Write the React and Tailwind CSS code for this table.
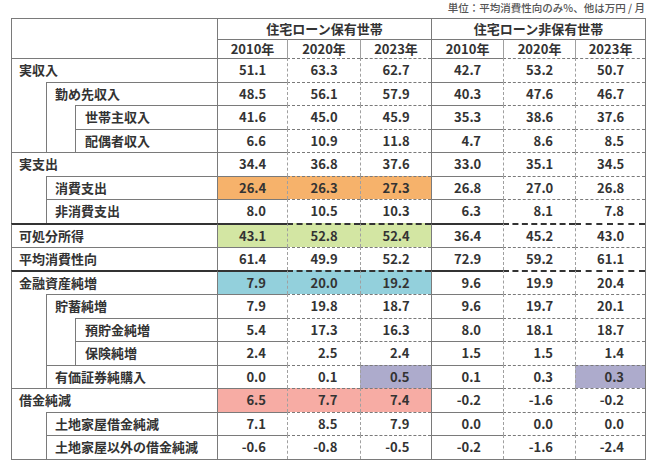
import React from 'react';

const BG = {
  o: 'bg-[#f6b26b]',
  g: 'bg-[#d3e6a3]',
  b: 'bg-[#93d0dc]',
  p: 'bg-[#adabcc]',
  r: 'bg-[#f7aca4]',
};

const rows = [
  { label: '実収入', span: 3, v: ['51.1', '63.3', '62.7', '42.7', '53.2', '50.7'] },
  { label: '勤め先収入', indent: 3, span: 2, v: ['48.5', '56.1', '57.9', '40.3', '47.6', '46.7'] },
  { label: '世帯主収入', indent: 2, span: 1, v: ['41.6', '45.0', '45.9', '35.3', '38.6', '37.6'] },
  { label: '配偶者収入', span: 1, v: ['6.6', '10.9', '11.8', '4.7', '8.6', '8.5'] },
  { label: '実支出', span: 3, v: ['34.4', '36.8', '37.6', '33.0', '35.1', '34.5'] },
  { label: '消費支出', indent: 2, span: 2, v: ['26.4', '26.3', '27.3', '26.8', '27.0', '26.8'], bg: ['o', 'o', 'o'] },
  { label: '非消費支出', span: 2, v: ['8.0', '10.5', '10.3', '6.3', '8.1', '7.8'] },
  { label: '可処分所得', span: 3, thick: true, v: ['43.1', '52.8', '52.4', '36.4', '45.2', '43.0'], bg: ['g', 'g', 'g'] },
  { label: '平均消費性向', span: 3, v: ['61.4', '49.9', '52.2', '72.9', '59.2', '61.1'] },
  { label: '金融資産純増', span: 3, thick: true, v: ['7.9', '20.0', '19.2', '9.6', '19.9', '20.4'], bg: ['b', 'b', 'b'] },
  { label: '貯蓄純増', indent: 4, span: 2, v: ['7.9', '19.8', '18.7', '9.6', '19.7', '20.1'] },
  { label: '預貯金純増', indent: 2, span: 1, v: ['5.4', '17.3', '16.3', '8.0', '18.1', '18.7'] },
  { label: '保険純増', span: 1, v: ['2.4', '2.5', '2.4', '1.5', '1.5', '1.4'] },
  { label: '有価証券純購入', span: 2, v: ['0.0', '0.1', '0.5', '0.1', '0.3', '0.3'], bg: [null, null, 'p', null, null, 'p'] },
  { label: '借金純減', span: 3, v: ['6.5', '7.7', '7.4', '-0.2', '-1.6', '-0.2'], bg: ['r', 'r', 'r'] },
  { label: '土地家屋借金純減', indent: 2, span: 2, v: ['7.1', '8.5', '7.9', '0.0', '0.0', '0.0'] },
  { label: '土地家屋以外の借金純減', span: 2, v: ['-0.6', '-0.8', '-0.5', '-0.2', '-1.6', '-2.4'] },
];

const padFor = { 3: 'pl-[7px]', 2: 'pl-[8px]', 1: 'pl-[9px]' };
const years = ['2010年', '2020年', '2023年', '2010年', '2020年', '2023年'];

function leftBorder(i) {
  return i % 3 === 0
    ? 'border-l border-l-[#7a7a7a] border-solid'
    : 'border-l border-l-[#a0a0a0] border-dashed';
}

export default function App() {
  return (
    <div
      className="w-[660px] h-[464px] bg-white text-[#333]"
      style={{ fontFamily: '"Noto Sans CJK JP", "Noto Sans", sans-serif' }}
    >
      <div className="h-[18px] flex items-start justify-end pr-[15px] pt-[1px]">
        <span className="text-[10.5px] leading-[14px] text-[#555] font-medium">
          単位：平均消費性向のみ%、他は万円 / 月
        </span>
      </div>
      <div className="pl-[11px]">
        <table className="table-fixed border-separate border-spacing-0 w-[635px] border-r border-b border-[#7a7a7a] text-[13px] font-bold">
          <colgroup>
            <col className="w-[35px]" />
            <col className="w-[29px]" />
            <col className="w-[142px]" />
            <col className="w-[70px]" />
            <col className="w-[73px]" />
            <col className="w-[71px]" />
            <col className="w-[72px]" />
            <col className="w-[72px]" />
            <col className="w-[70px]" />
          </colgroup>
          <tbody>
            <tr className="h-[21px]">
              <td colSpan={3} rowSpan={2} className="border-t border-l border-[#7a7a7a] p-0" />
              <td colSpan={3} className="border-t border-l border-[#7a7a7a] p-0 text-center leading-[20px]">
                住宅ローン保有世帯
              </td>
              <td colSpan={3} className="border-t border-l border-[#7a7a7a] p-0 text-center leading-[20px]">
                住宅ローン非保有世帯
              </td>
            </tr>
            <tr className="h-[19px]">
              {years.map((y, i) => (
                <td
                  key={i}
                  className={`border-t border-t-[#7a7a7a] border-solid p-0 text-center leading-[18px] ${leftBorder(i)}`}
                >
                  {y}
                </td>
              ))}
            </tr>
            {rows.map((r, ri) => {
              const top = r.thick
                ? 'border-t-2 border-t-[#333]'
                : 'border-t border-t-[#7a7a7a]';
              return (
                <tr key={ri} className="h-[23.5px]">
                  {r.indent ? (
                    <td
                      rowSpan={r.indent}
                      colSpan={1}
                      className="border-l border-[#7a7a7a] p-0"
                    />
                  ) : null}
                  <td
                    colSpan={r.span}
                    className={`${top} border-l border-l-[#7a7a7a] border-solid p-0 ${padFor[r.span]} leading-[22px] whitespace-nowrap`}
                  >
                    {r.label}
                  </td>
                  {r.v.map((v, i) => {
                    const bg = r.bg && r.bg[i] ? BG[r.bg[i]] : '';
                    return (
                      <td
                        key={i}
                        className={`${top} ${leftBorder(i)} ${bg} p-0 text-center leading-[22px]`}
                      >
                        <span className="inline-block w-[27px] text-right">{v}</span>
                      </td>
                    );
                  })}
                </tr>
              );
            })}
          </tbody>
        </table>
      </div>
    </div>
  );
}
